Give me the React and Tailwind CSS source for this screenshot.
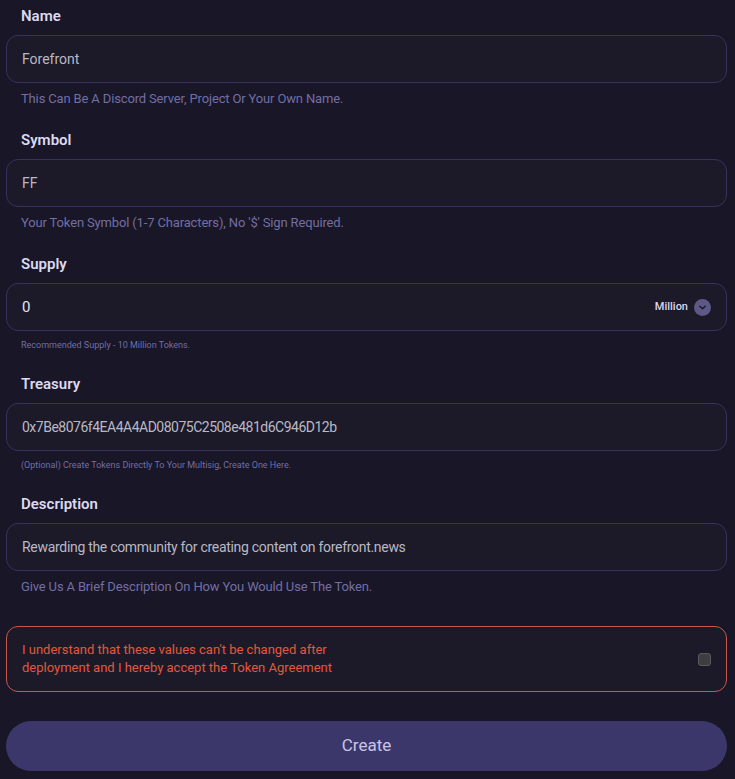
import { useState } from "react";

const font = { fontFamily: "Roboto, 'Noto Sans', sans-serif" };

const Field = ({ label, value, help, small, right, valueClass = "text-[14px] text-[#b9b8c6]", className = "" }) => (
  <div className={className}>
    <label className="block pl-[15px] text-[15px] leading-[20px] font-semibold text-[#dcdaf0]">{label}</label>
    <div className="mt-[9px] h-[48px] flex items-center rounded-[12px] border border-[#36325e] bg-[#1c1a28] pl-[15px] pr-[15px]">
      <span className={`flex-1 ${valueClass}`}>{value}</span>
      {right}
    </div>
    {small ? (
      <p className="mt-[8px] pl-[15px] text-[9px] leading-[12px] text-[#736ea3]">{help}</p>
    ) : (
      <p className="mt-[6px] pl-[15px] text-[13px] leading-[20px] tracking-[-0.15px] text-[#736ea3]">{help}</p>
    )}
  </div>
);

export default function App() {
  const [checked, setChecked] = useState(false);

  return (
    <div className="min-h-[779px] bg-[#181627] pl-[6px] pr-[8px] pt-[6px]" style={font}>
      <Field
        label="Name"
        value="Forefront"
        help="This Can Be A Discord Server, Project Or Your Own Name."
      />
      <Field
        className="mt-[21px]"
        label="Symbol"
        value="FF"
        help="Your Token Symbol (1-7 Characters), No '$' Sign Required."
      />
      <Field
        className="mt-[21px]"
        label="Supply"
        value="0"
        valueClass="text-[#e4e3f0] text-[15px]"
        small
        help="Recommended Supply - 10 Million Tokens."
        right={
          <div className="flex items-center gap-[6px]">
            <span className="text-[11px] font-medium text-[#d8d6ec]">Million</span>
            <span className="flex h-[17px] w-[17px] items-center justify-center rounded-full bg-[#5d5885]">
              <svg width="9" height="9" viewBox="0 0 10 10" fill="none">
                <path d="M2 3.5 L5 6.5 L8 3.5" stroke="#1c1a28" strokeWidth="1.6" strokeLinecap="round" strokeLinejoin="round" />
              </svg>
            </span>
          </div>
        }
      />
      <Field
        className="mt-[23px]"
        label="Treasury"
        value="0x7Be8076f4EA4A4AD08075C2508e481d6C946D12b"
        valueClass="text-[14px] tracking-[-0.5px] text-[#b9b8c6]"
        small
        help="(Optional) Create Tokens Directly To Your Multisig, Create One Here."
      />
      <Field
        className="mt-[23px]"
        label="Description"
        value="Rewarding the community for creating content on forefront.news"
        valueClass="text-[14px] tracking-[-0.3px] text-[#b9b8c6]"
        help="Give Us A Brief Description On How You Would Use The Token."
      />

      <div className="mt-[29px] h-[66px] flex items-center justify-between rounded-[12px] border border-[#c9574a] bg-[#1c1a28] pl-[15px] pr-[15px]">
        <p className="text-[13px] leading-[18px] text-[#e5563f]">
          I understand that these values can't be changed after
          <br />
          deployment and I hereby accept the Token Agreement
        </p>
        <button
          onClick={() => setChecked(!checked)}
          className={`h-[13px] w-[13px] rounded-[3px] border border-[#5a5a5e] ${checked ? "bg-[#5d5885]" : "bg-[#3e3e42]"}`}
        />
      </div>

      <button className="mt-[29px] mb-[8px] h-[50px] w-full rounded-full bg-[#3c376b] text-[17px] text-[#c8c5e8]">
        Create
      </button>
    </div>
  );
}
